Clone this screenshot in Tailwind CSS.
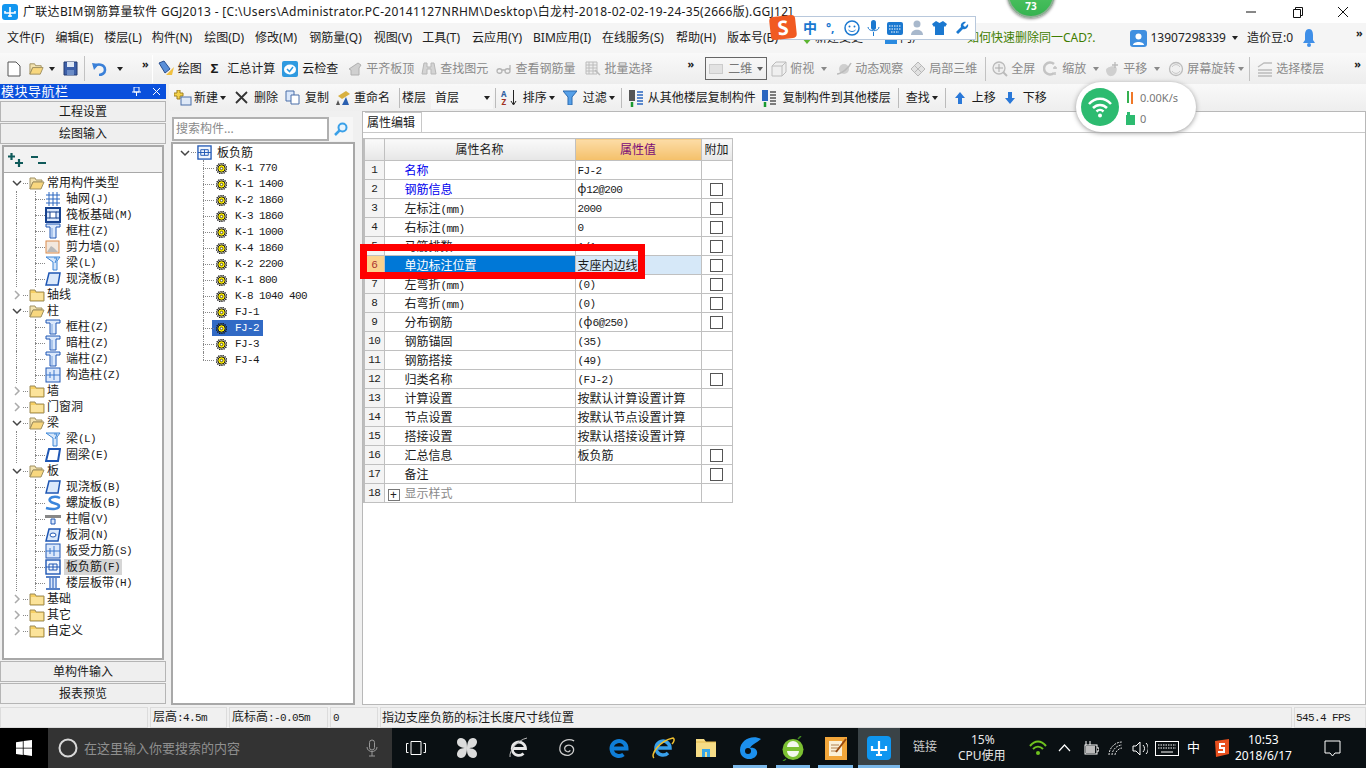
<!DOCTYPE html>
<html lang="en">
<head>
  <meta charset="UTF-8">
  <title>广联达BIM钢筋算量软件 GGJ2013</title>
  <script src="https://cdn.jsdelivr.net/npm/@tailwindcss/browser@4"></script>
</head>
<body class="w-[1366px] h-[768px] overflow-hidden relative flex flex-col bg-[#f0f0f0] text-[#1a1a1a] text-[12px] leading-none font-['Noto_Sans','Noto_Sans_CJK_SC',sans-serif]">

  <svg class="hidden">
    <symbol id="folder" viewBox="0 0 16 16"><path d="M1 3h5l1 2h8v9H1z" fill="#f6cf63" stroke="#9a8a5a"/><path d="M2 6h12v7H2z" fill="#fbe39a"/></symbol>
    <symbol id="folderopen" viewBox="0 0 16 16"><path d="M1 3h5l1 2h6v2H4l-3 7z" fill="#f3e3b0" stroke="#a09060"/><path d="M4 7h11l-3 7H1z" fill="#f8d77e" stroke="#a09060"/></symbol>
    <symbol id="column" viewBox="0 0 16 16"><path d="M1 1h14v3H11v11H5V4H1z" fill="#dbe8fb" stroke="#1f57b4"/><path d="M7 5v9" stroke="#7fa5de"/></symbol>
    <symbol id="grid" viewBox="0 0 16 16"><path d="M1 4h14M1 8h14M1 12h14M4 1v14M8 1v14M12 1v14" stroke="#2a66c0" fill="none"/></symbol>
    <symbol id="raft" viewBox="0 0 16 16"><rect x="1" y="1" width="14" height="14" fill="#dbe8fb" stroke="#17428f" stroke-width="2"/><rect x="5" y="5" width="6" height="6" fill="#fff" stroke="#17428f"/><path d="M1 5h4M11 5h4M1 11h4M11 11h4" stroke="#17428f"/></symbol>
    <symbol id="wall" viewBox="0 0 16 16"><rect x="1" y="2" width="13" height="12" fill="#f2e8de" stroke="#d98a4a"/><path d="M2 13l4-6 3 2 4 4z" fill="#b9b9b9"/></symbol>
    <symbol id="beam" viewBox="0 0 16 16"><path d="M1 2h14l-3 4v9H8V7z" fill="#d5e6fa" stroke="#3d86d6"/><path d="M9 3l3 0-2 5" stroke="#3d86d6" fill="none"/></symbol>
    <symbol id="slab" viewBox="0 0 16 16"><path d="M4 2h11l-2 12H1z" fill="#dbe9fb" stroke="#1f57b4" stroke-width="1.500"/></symbol>
    <symbol id="ring" viewBox="0 0 16 16"><path d="M4 2h11l-2 12H1z" fill="#fff" stroke="#1f57b4" stroke-width="2"/></symbol>
    <symbol id="spiral" viewBox="0 0 16 16"><path d="M15 3C9 0 3 3 5 6s9 2 9 5-6 4-13 2" fill="none" stroke="#3b86dc" stroke-width="2.500"/></symbol>
    <symbol id="cap" viewBox="0 0 16 16"><path d="M0 4h16v3H0z" fill="#888"/><path d="M6 8h4v5H6z" fill="#dbe8fb" stroke="#1f57b4"/></symbol>
    <symbol id="hole" viewBox="0 0 16 16"><path d="M4 2h11l-2 12H1z" fill="#dbe9fb" stroke="#1f57b4" stroke-width="1.500"/><ellipse cx="8" cy="8" rx="3" ry="2" fill="#fff" stroke="#1f57b4"/></symbol>
    <symbol id="rebar" viewBox="0 0 16 16"><rect x="1" y="1" width="14" height="14" fill="#dbe8fb" stroke="#1f57b4"/><path d="M1 8h14M9 3v10M5 5v6" stroke="#3b76cc" fill="none"/></symbol>
    <symbol id="neg" viewBox="0 0 16 16"><rect x="1" y="1" width="14" height="14" fill="#f1f6fd" stroke="#1f57b4" stroke-width="1.400"/><path d="M1 8h14M8 5v6M4 5h8v6H4z" stroke="#1f57b4" fill="none"/></symbol>
    <symbol id="band" viewBox="0 0 16 16"><path d="M1 2h14M1 14h14" stroke="#1f57b4" stroke-width="1.500"/><path d="M4 3h8v10H4z" fill="#dbe8fb"/><path d="M5 3v10M11 3v10M8 3v10" stroke="#1f57b4"/></symbol>
    <symbol id="gear" viewBox="0 0 12 12"><circle cx="6" cy="6" r="5.500" fill="none" stroke="#111" stroke-width="1.600" stroke-dasharray="1.400 1"/><circle cx="6" cy="6" r="4" fill="#ffee00" stroke="#111"/><circle cx="6" cy="6" r="1.400" fill="#fff" stroke="#111" stroke-width=".7"/></symbol>
    <symbol id="chev-d" viewBox="0 0 10 10"><path d="M1 3l4 4 4-4" fill="none" stroke="#444" stroke-width="1.500"/></symbol>
    <symbol id="chev-r" viewBox="0 0 10 10"><path d="M3 1l4 4-4 4" fill="none" stroke="#aaa" stroke-width="1.500"/></symbol>
    <symbol id="caret" viewBox="0 0 8 8"><path d="M1 2h6L4 6z" fill="#222"/></symbol>
    <!-- disabled toolbar icons -->
    <symbol id="g-align" viewBox="0 0 16 16"><path d="M2 8l9-6 3 2-2 3v7H4V9z" fill="#d0d0d0" stroke="#b0b0b0"/></symbol>
    <symbol id="g-binoc" viewBox="0 0 16 16"><path d="M3 2h3v4h4V2h3l2 11H10V8H6v5H1z" fill="#d4d4d4" stroke="#b8b8b8"/></symbol>
    <symbol id="g-glasses" viewBox="0 0 16 16"><path d="M1 10c0-3 5-3 5 0s-5 3-5 0zM9 10c0-3 5-3 5 0s-5 3-5 0zM6 9h3M14 9V4" fill="none" stroke="#b4b4b4" stroke-width="1.300"/></symbol>
    <symbol id="g-table" viewBox="0 0 16 16"><path d="M1 1h11v12H1zM1 4h11M1 7h11M1 10h11M4 1v12M8 1v12" fill="#eee" stroke="#bcbcbc"/><path d="M10 9l5 5" stroke="#bcbcbc" stroke-width="1.500"/></symbol>
    <symbol id="g-cube" viewBox="0 0 16 16"><path d="M1 5l4-4h10v10l-4 4H1zM1 5h10v10M11 5l4-4" fill="#efefef" stroke="#bcbcbc"/></symbol>
    <symbol id="g-orbit" viewBox="0 0 16 16"><circle cx="8" cy="8" r="5" fill="#cfcfcf"/><path d="M1 13C5 13 13 7 15 2" fill="none" stroke="#bbb" stroke-width="1.500"/></symbol>
    <symbol id="g-local" viewBox="0 0 16 16"><path d="M8 1l7 7-7 7-7-7z" fill="#e2e2e2" stroke="#b8b8b8"/><path d="M4.500 4.500l7 7M11.500 4.500l-7 7" stroke="#b8b8b8"/></symbol>
    <symbol id="g-fit" viewBox="0 0 16 16"><circle cx="7" cy="7" r="6" fill="#eee" stroke="#bbb" stroke-width="1.300"/><path d="M7 3v8M3 7h8" stroke="#aaa"/><path d="M11 11l4 4" stroke="#bbb" stroke-width="2"/></symbol>
    <symbol id="g-zoom" viewBox="0 0 16 16"><path d="M11 3a6 6 0 1 0 0 9" fill="none" stroke="#c4c4c4" stroke-width="2.500"/><path d="M12 5v3M10 7h4M12 11v3" stroke="#c4c4c4" stroke-width="1.500"/></symbol>
    <symbol id="g-pan" viewBox="0 0 16 16"><path d="M2 9c0-3 8-5 10-3s0 8-4 9-6-3-6-6z" fill="#cfcfcf"/><path d="M11 1v6M8 4h6" stroke="#bbb" stroke-width="1.300"/></symbol>
    <symbol id="g-rotate" viewBox="0 0 16 16"><circle cx="8" cy="8" r="6.500" fill="#f0f0f0" stroke="#bcbcbc" stroke-width="1.300"/><path d="M4 6a4.500 4.500 0 0 1 8 0M12 10a4.500 4.500 0 0 1-8 0" fill="none" stroke="#c8c8c8"/></symbol>
    <symbol id="g-floor" viewBox="0 0 16 16"><path d="M1 6l6-4h8M1 9h14M1 12h14M1 15h14" fill="none" stroke="#bcbcbc" stroke-width="1.300"/></symbol>
  </svg>

  <!-- title bar -->
  <div class="h-[23px] shrink-0 bg-white flex items-center pl-[2px]">
    <svg class="w-[16px] h-[16px] mr-[5px]" viewBox="0 0 16 16"><rect width="16" height="16" rx="3" fill="#1296f0"/><path d="M8 3v10M3 7v2h10V7M6 12h4" stroke="#fff" stroke-width="1.600" fill="none"/></svg>
    <span class="text-[12px] tracking-[0.31px]">广联达BIM钢筋算量软件 GGJ2013 - [C:\Users\Administrator.PC-20141127NRHM\Desktop\白龙村-2018-02-02-19-24-35(2666版).GGJ12]</span>
    <div class="ml-auto flex items-center h-full">
      <svg class="w-[46px] h-[20px]" viewBox="0 0 46 20"><path d="M18 10h10" stroke="#111"/></svg>
      <svg class="w-[46px] h-[20px]" viewBox="0 0 46 20"><path d="M19.500 7.500h7v8h-7zM21.500 7.500v-2h7v8h-2" fill="none" stroke="#111"/></svg>
      <svg class="w-[46px] h-[20px]" viewBox="0 0 46 20"><path d="M18 5l10 10M28 5L18 15" stroke="#111"/></svg>
    </div>
  </div>

  <!-- menu bar -->
  <div class="h-[30px] shrink-0 bg-[#f5f5f5] flex items-center pl-[7px] gap-[11px] text-[#222] whitespace-nowrap">
    <span>文件(F)</span><span>编辑(E)</span><span>楼层(L)</span><span class="-ml-[1px]">构件(N)</span><span class="ml-[1px]">绘图(D)</span><span>修改(M)</span><span class="ml-[1px]">钢筋量(Q)</span><span class="ml-[1px]">视图(V)</span><span class="-ml-[1px]">工具(T)</span><span class="ml-[1px]">云应用(Y)</span><span>BIM应用(I)</span><span>在线服务(S)</span><span class="ml-[1px]">帮助(H)</span><span>版本号(B)</span>
    <div class="ml-[11px] flex items-center gap-[1px]">
      <svg class="w-[14px] h-[14px]" viewBox="0 0 14 14"><path d="M7 13L1 6l3-4h6l3 4z" fill="#5cb531"/></svg>
      <span>新建变更</span>
    </div>
    <div class="ml-[10px] flex items-center gap-[2px]">
      <svg class="w-[14px] h-[14px]" viewBox="0 0 14 14"><path d="M1 4h12v9H1z" fill="#2a8ae0"/></svg>
      <span>门户</span>
    </div>
    <span class="ml-[32px] text-[#3f7d00]">如何快速删除同一CAD?.</span>
    <div class="ml-[24px] flex items-center">
      <svg class="w-[17px] h-[17px] mr-[3px]" viewBox="0 0 17 17"><rect width="17" height="17" rx="3" fill="#3f8fe0"/><circle cx="8.500" cy="6.500" r="3" fill="#fff"/><path d="M3 15c0-4 11-4 11 0z" fill="#fff"/></svg>
      <span>13907298339</span>
      <svg class="w-[8px] h-[8px] ml-[5px]"><use href="#caret"/></svg>
      <span class="ml-[8px]">造价豆:0</span>
      <svg class="w-[14px] h-[20px] ml-[9px]" viewBox="0 0 14 20"><path d="M7 1c-3 0-4 3-4 6v5l-2 3h12l-2-3V7c0-3-1-6-4-6z" fill="#3f8fe8"/><circle cx="7" cy="17" r="2" fill="#3f8fe8"/></svg>
      <span class="ml-[40px] font-bold text-[11px] relative -top-[6px]">»</span>
    </div>
  </div>

  <!-- main toolbar -->
  <div class="h-[31px] shrink-0 flex items-center whitespace-nowrap relative bg-gradient-to-b from-[#f9f9f9] to-[#ededed]">
    <svg class="w-[14px] h-[16px] ml-[7px]" viewBox="0 0 14 16"><path d="M1 1h8l4 4v10H1z" fill="#fff" stroke="#555"/></svg>
    <svg class="w-[17px] h-[15px] ml-[7px]" viewBox="0 0 16 16"><use href="#folderopen"/></svg>
    <svg class="w-[8px] h-[8px] ml-[3px]"><use href="#caret"/></svg>
    <svg class="w-[15px] h-[15px] ml-[7px]" viewBox="0 0 15 15"><path d="M1 1h13v13H1z" fill="#3c5fa8" stroke="#223a70"/><path d="M4 1h7v5H4z" fill="#dfe8f5"/><path d="M4 9h7v5H4z" fill="#6b8cc6"/></svg>
    <div class="w-px h-[25px] bg-[#c2c2c2] ml-[6px]"></div>
    <svg class="w-[15px] h-[14px] ml-[7px]" viewBox="0 0 15 14"><path d="M2 5c3-4 11-3 11 3 0 3-3 5-6 5" fill="none" stroke="#3a80d8" stroke-width="2.600"/><path d="M0 1l7 1-5 6z" fill="#3a80d8"/></svg>
    <svg class="w-[8px] h-[8px] ml-[9px]"><use href="#caret"/></svg>
    <span class="ml-[18px] font-bold text-[11px] relative -top-[5px]">»</span>
    <div class="w-px h-[28px] bg-[#fff] ml-[3px]"></div>
    <svg class="w-[18px] h-[18px] ml-[4px]" viewBox="0 0 18 18"><path d="M2 3l5-2 6 8-5 4z" fill="#5a8fd8" stroke="#2a4f90"/><path d="M9 15l8-8-2 8z" fill="#f0c040"/></svg>
    <span class="ml-[3px]">绘图</span>
    <span class="ml-[9px] font-bold text-[13px]">Σ</span>
    <span class="ml-[9px]">汇总计算</span>
    <svg class="w-[16px] h-[16px] ml-[7px]" viewBox="0 0 16 16"><rect width="16" height="16" rx="2" fill="#2f9ae0"/><ellipse cx="8" cy="8.500" rx="6" ry="5" fill="#fff"/><path d="M5 8l2.500 2.500L11 6" stroke="#2f9ae0" stroke-width="1.500" fill="none"/></svg>
    <span class="ml-[4px]">云检查</span>
    <svg class="w-[16px] h-[16px] ml-[9px]"><use href="#g-align"/></svg>
    <span class="ml-[3px] text-[#8a8a8a]">平齐板顶</span>
    <svg class="w-[16px] h-[16px] ml-[7px]"><use href="#g-binoc"/></svg>
    <span class="ml-[3px] text-[#8a8a8a]">查找图元</span>
    <svg class="w-[16px] h-[16px] ml-[8px]"><use href="#g-glasses"/></svg>
    <span class="ml-[3px] text-[#8a8a8a]">查看钢筋量</span>
    <svg class="w-[16px] h-[16px] ml-[10px]"><use href="#g-table"/></svg>
    <span class="ml-[3px] text-[#8a8a8a]">批量选择</span>
    <span class="ml-[35px] font-bold text-[11px] relative -top-[5px]">»</span>
    <div class="ml-[11px] w-[62px] h-[23px] border border-[#666] flex items-center pl-[3px] text-[#777]">
      <span class="w-[14px] h-[10px] bg-[#e2e2e2] border border-[#ccc] mr-[5px]"></span>二维
      <svg class="w-[8px] h-[8px] ml-auto mr-[2px] opacity-70"><use href="#caret"/></svg>
    </div>
    <svg class="w-[16px] h-[16px] ml-[4px]"><use href="#g-cube"/></svg>
    <span class="ml-[3px] text-[#8a8a8a]">俯视</span>
    <svg class="w-[8px] h-[8px] ml-[6px] opacity-50"><use href="#caret"/></svg>
    <svg class="w-[16px] h-[16px] ml-[8px]"><use href="#g-orbit"/></svg>
    <span class="ml-[3px] text-[#8a8a8a]">动态观察</span>
    <svg class="w-[16px] h-[16px] ml-[7px]"><use href="#g-local"/></svg>
    <span class="ml-[3px] text-[#8a8a8a]">局部三维</span>
    <div class="w-px h-[24px] bg-[#c2c2c2] ml-[8px]"></div>
    <svg class="w-[16px] h-[16px] ml-[6px]"><use href="#g-fit"/></svg>
    <span class="ml-[3px] text-[#8a8a8a]">全屏</span>
    <svg class="w-[16px] h-[16px] ml-[8px]"><use href="#g-zoom"/></svg>
    <span class="ml-[3px] text-[#8a8a8a]">缩放</span>
    <svg class="w-[8px] h-[8px] ml-[6px] opacity-50"><use href="#caret"/></svg>
    <svg class="w-[16px] h-[16px] ml-[4px]"><use href="#g-pan"/></svg>
    <span class="ml-[3px] text-[#8a8a8a]">平移</span>
    <svg class="w-[8px] h-[8px] ml-[6px] opacity-50"><use href="#caret"/></svg>
    <svg class="w-[16px] h-[16px] ml-[7px]"><use href="#g-rotate"/></svg>
    <span class="ml-[3px] text-[#8a8a8a]">屏幕旋转</span>
    <svg class="w-[8px] h-[8px] ml-[2px] opacity-50"><use href="#caret"/></svg>
    <div class="w-px h-[24px] bg-[#c2c2c2] ml-[4px]"></div>
    <svg class="w-[16px] h-[16px] ml-[7px]"><use href="#g-floor"/></svg>
    <span class="ml-[3px] text-[#8a8a8a]">选择楼层</span>
    <span class="ml-auto mr-[5px] font-bold text-[11px] relative -top-[5px]">»</span>
  </div>

  <!-- work area -->
  <div class="flex-1 min-h-0 flex">
    <!-- module nav -->
    <div class="w-[166px] shrink-0 flex flex-col">
      <div class="h-[15px] bg-[#0a50dc] text-white flex items-center pl-[1px] text-[13px] tracking-[0.5px]">模块导航栏
        <svg class="w-[9px] h-[9px] ml-auto" viewBox="0 0 9 9"><path d="M2 0h5v5H2zM0 5h9M4.500 5v4" stroke="#fff" fill="none"/></svg>
        <svg class="w-[9px] h-[9px] ml-[11px] mr-[5px]" viewBox="0 0 9 9"><path d="M1 1l7 7M8 1L1 8" stroke="#fff"/></svg>
      </div>
      <div class="h-[21px] mt-[2px] bg-[#efefef] border border-[#b5b5b5] flex items-center justify-center">工程设置</div>
      <div class="h-[21px] mt-[1px] bg-[#efefef] border border-[#b5b5b5] flex items-center justify-center">绘图输入</div>
      <div class="mt-[1px] h-[515px] mx-[2px] border-2 border-[#a8a8a8] bg-white flex flex-col">
        <div class="h-[26px] shrink-0 bg-[#f2f2f2] border-b border-[#a8a8a8] flex items-center pl-[3px] gap-[6px]">
          <svg class="w-[17px] h-[16px]" viewBox="0 0 17 16"><path d="M4.500 1v7M1 4.500h7M12 7v8M8 11h8" stroke="#0f5a5a" stroke-width="2.200"/></svg>
          <svg class="w-[17px] h-[16px]" viewBox="0 0 17 16"><path d="M1 5h7M8 11h8" stroke="#0f5a5a" stroke-width="2.200"/></svg>
        </div>
        <div id="navTree" class="flex-1 pt-[2px] overflow-hidden"></div>
      </div>
      <div class="h-[21px] mt-[1px] bg-[#efefef] border border-[#b5b5b5] flex items-center justify-center">单构件输入</div>
      <div class="h-[21px] mt-[1px] bg-[#efefef] border border-[#b5b5b5] flex items-center justify-center">报表预览</div>
    </div>

    <div class="flex-1 min-w-0 flex flex-col">
      <!-- component toolbar -->
      <div class="h-[27px] shrink-0 ml-[3px] flex items-center whitespace-nowrap bg-gradient-to-b from-[#f9f9f9] to-[#eeeeee] text-[12px]">
        <svg class="w-[18px] h-[16px] ml-[5px]" viewBox="0 0 18 16"><path d="M3 0h3v3h3v3H6v3H3V6H0V3h3z" fill="#f4d24a" stroke="#a08020"/><rect x="7" y="7" width="10" height="8" fill="#dfe9f7" stroke="#4a6fa8"/></svg>
        <span class="ml-[2px]">新建</span>
        <svg class="w-[8px] h-[8px] ml-[1px]"><use href="#caret"/></svg>
        <svg class="w-[13px] h-[13px] ml-[8px]" viewBox="0 0 13 13"><path d="M1 1l11 11M12 1L1 12" stroke="#333" stroke-width="1.800"/></svg>
        <span class="ml-[6px]">删除</span>
        <svg class="w-[15px] h-[15px] ml-[7px]" viewBox="0 0 15 15"><path d="M1 1h8v10H1z" fill="#dbe8fb" stroke="#4a6fa8"/><path d="M6 5h8v9H6z" fill="#fff" stroke="#4a6fa8"/></svg>
        <span class="ml-[5px]">复制</span>
        <svg class="w-[17px] h-[16px] ml-[6px]" viewBox="0 0 17 16"><path d="M3 6l8-5 4 3-8 5z" fill="#d8b040"/><path d="M7 15l4-8 3 8z" fill="#2a5fb0"/><path d="M1 15l2-5 2 5z" fill="#555"/></svg>
        <span class="ml-[2px]">重命名</span>
        <div class="w-px h-[20px] bg-[#bbb] ml-[9px]"></div>
        <span class="ml-[2px]">楼层</span>
        <div class="ml-[5px] w-[62px] h-[23px] bg-[#f7f7f7] flex items-center pl-[4px]">首层<svg class="w-[8px] h-[8px] ml-auto mr-[2px]"><use href="#caret"/></svg></div>
        <div class="w-px h-[20px] bg-[#bbb] ml-[2px]"></div>
        <span class="ml-[5px] text-[8px] leading-[8px] text-center font-bold text-[#3060a0]">A<br><span class="text-[#a03020]">Z</span></span>
        <svg class="w-[7px] h-[16px] ml-[3px]" viewBox="0 0 7 16"><path d="M3.500 0v14M1 11l2.500 4L6 11" stroke="#222" fill="none"/></svg>
        <span class="ml-[6px]">排序</span>
        <svg class="w-[8px] h-[8px] ml-[1px]"><use href="#caret"/></svg>
        <svg class="w-[14px] h-[15px] ml-[7px]" viewBox="0 0 14 15"><path d="M0 1h14L9 7v8H5V7z" fill="#56a0e8" stroke="#2a6ab0"/></svg>
        <span class="ml-[6px]">过滤</span>
        <svg class="w-[8px] h-[8px] ml-[1px]"><use href="#caret"/></svg>
        <div class="w-px h-[20px] bg-[#bbb] ml-[5px]"></div>
        <svg class="w-[16px] h-[18px] ml-[6px]" viewBox="0 0 16 18"><rect x="1" y="1" width="6" height="11" fill="#555"/><path d="M9 3h6M9 6h6M9 9h6M9 12h6M9 15h6" stroke="#2a66c0" stroke-width="1.500"/><path d="M4 13v5" stroke="#1a9a30" stroke-width="2.500"/></svg>
        <span class="ml-[4px]">从其他楼层复制构件</span>
        <svg class="w-[16px] h-[18px] ml-[5px]" viewBox="0 0 16 18"><rect x="1" y="1" width="6" height="11" fill="#2a66c0"/><path d="M9 3h6M9 6h6M9 9h6M9 12h6M9 15h6" stroke="#555" stroke-width="1.500"/><path d="M4 13v5" stroke="#1a9a30" stroke-width="2.500"/></svg>
        <span class="ml-[6px]">复制构件到其他楼层</span>
        <div class="w-px h-[20px] bg-[#bbb] ml-[7px]"></div>
        <span class="ml-[7px]">查找</span>
        <svg class="w-[8px] h-[8px] ml-[1px]"><use href="#caret"/></svg>
        <div class="w-px h-[20px] bg-[#bbb] ml-[6px]"></div>
        <svg class="w-[10px] h-[12px] ml-[9px]" viewBox="0 0 10 12"><path d="M5 0l5 6H7v6H3V6H0z" fill="#2a78d8"/></svg>
        <span class="ml-[7px]">上移</span>
        <svg class="w-[10px] h-[12px] ml-[9px]" viewBox="0 0 10 12"><path d="M5 12l5-6H7V0H3v6H0z" fill="#2a78d8"/></svg>
        <span class="ml-[8px]">下移</span>
      </div>

      <div class="flex-1 min-h-0 flex pb-[2px]">
        <!-- component tree -->
        <div class="w-[184px] shrink-0 ml-[5px] flex flex-col">
          <div class="h-[31px] shrink-0 flex items-center pt-[4px]">
            <div class="w-[157px] h-[24px] ml-[1px] bg-white border-2 border-[#b0b0b0] flex items-center pl-[2px] text-[#8a8a8a]">搜索构件...</div>
            <div class="w-[24px] h-[24px] bg-[#f6f6f6] flex items-center justify-center">
              <svg class="w-[14px] h-[14px]" viewBox="0 0 14 14"><circle cx="8.500" cy="5.500" r="4" fill="#e8f4fd" stroke="#3aa0e8" stroke-width="2"/><path d="M5.500 8.500L1 13" stroke="#3aa0e8" stroke-width="2.500"/></svg>
            </div>
          </div>
          <div id="compTree" class="flex-1 bg-white border-2 border-[#a8a8a8] overflow-hidden"></div>
        </div>

        <!-- property editor -->
        <div class="flex-1 min-w-0 ml-[7px] bg-white border border-[#b8b8b8] flex flex-col">
          <div class="h-[21px] shrink-0 border-b border-[#c8c8c8] flex items-end">
            <div class="w-[57px] h-[20px] ml-[2px] border-r border-t border-[#c8c8c8] flex items-center pl-[2px]">属性编辑</div>
          </div>
          <table class="mt-[5px] border-collapse table-fixed w-[368px] border-l-2 border-[#bdbdbd]">
            <colgroup><col class="w-[20px]"><col class="w-[191px]"><col class="w-[126px]"><col class="w-[31px]"></colgroup>
            <thead><tr class="h-[22px]">
              <th class="font-normal bg-gradient-to-b from-[#fafafa] to-[#e6e6e6] border border-[#c0c0c0]"></th>
              <th class="font-normal bg-gradient-to-b from-[#fafafa] to-[#e6e6e6] border border-[#c0c0c0]">属性名称</th>
              <th class="font-normal text-[#7a0a78] bg-gradient-to-b from-[#fcdca6] to-[#f4c068] border border-[#c0c0c0]">属性值</th>
              <th class="font-normal bg-gradient-to-b from-[#fafafa] to-[#e6e6e6] border border-[#c0c0c0]">附加</th>
            </tr></thead>
            <tbody id="props"></tbody>
          </table>
        </div>
      </div>
    </div>
  </div>

  <!-- status bar -->
  <div class="h-[21px] shrink-0 flex gap-[2px] text-[12px] bg-[#f0f0f0]">
    <div class="w-[148px] border border-[#dcdcdc]"></div>
    <div class="w-[77px] border border-[#dcdcdc] flex items-center pl-[2px]"><span class="js-mix">层高:4.5m</span></div>
    <div class="w-[99px] border border-[#dcdcdc] flex items-center pl-[2px]"><span class="js-mix">底标高:-0.05m</span></div>
    <div class="w-[48px] border border-[#dcdcdc] flex items-center pl-[2px]"><span class="js-mix">0</span></div>
    <div class="w-[912px] border border-[#dcdcdc] flex items-center pl-[1px]">指边支座负筋的标注长度尺寸线位置</div>
    <div class="flex-1 border border-[#dcdcdc] flex items-center pl-[1px]"><span class="js-mix">545.4 FPS</span></div>
  </div>

  <!-- taskbar -->
  <div class="h-[40px] shrink-0 bg-[#0a1013] flex items-center text-white whitespace-nowrap">
    <div class="w-[48px] h-full bg-black flex items-center justify-center">
      <svg class="w-[16px] h-[16px]" viewBox="0 0 16 16"><path d="M0 2.200l6.800-1v6.500H0zM7.600 1l8.400-1v7.700H7.600zM0 8.400h6.800v6.500l-6.800-1zM7.600 8.400H16V16l-8.400-1.200z" fill="#fff"/></svg>
    </div>
    <div class="w-[344px] h-full bg-[#333333] flex items-center pl-[9px] text-[13px] text-[#8f8f8f]">
      <svg class="w-[22px] h-[22px] mr-[5px]" viewBox="0 0 22 22"><circle cx="11" cy="11" r="8.500" fill="none" stroke="#d8d8d8" stroke-width="2"/></svg>
      在这里输入你要搜索的内容
      <svg class="w-[12px] h-[18px] ml-auto mr-[14px]" viewBox="0 0 12 18"><rect x="3.500" y="1" width="5" height="10" rx="2.500" fill="none" stroke="#999"/><path d="M1 8c0 6 10 6 10 0M6 13v4M3 17h6" stroke="#999" fill="none"/></svg>
    </div>
    <div class="flex-1 h-full relative" id="tray">
      <svg class="absolute left-[14px] top-[13px] w-[20px] h-[14px]" viewBox="0 0 20 14"><path d="M5 .5h10v13H5zM2.500 2.500H.5v9h2M17.500 2.500h2v9h-2" fill="none" stroke="#fff"/></svg>
      <svg class="absolute left-[64px] top-[9px] w-[22px] h-[22px]" viewBox="0 0 22 22"><path d="M11 11C5 11 1 9 1 5s4-5 7-3 3 5 3 9zM11 11c0-6 2-10 6-10s5 4 3 7-5 3-9 3zM11 11c6 0 10 2 10 6s-4 5-7 3-3-5-3-9zM11 11c0 6-2 10-6 10s-5-4-3-7 5-3 9-3z" fill="#dcdcdc"/></svg>
      <svg class="absolute left-[116px] top-[9px] w-[21px] h-[22px]" viewBox="0 0 21 22"><path d="M4 11.500h13.500a6.700 6.700 0 1 0-2 5" fill="none" stroke="#e8e8e8" stroke-width="2.800"/><path d="M2 20C1 13 10 3 19 1" fill="none" stroke="#bbb"/></svg>
      <svg class="absolute left-[166px] top-[10px] w-[19px] h-[19px]" viewBox="0 0 20 20"><path d="M17 3C10 0 3 3 2 10s6 9 10 8 6-6 3-9-8-1-8 2 4 5 6 2" fill="none" stroke="#ccc" stroke-width="1.300"/></svg>
      <svg class="absolute left-[216px] top-[9px] w-[21px] h-[22px]" viewBox="0 0 21 22"><path d="M3 11.500h15.500a7.500 7.500 0 1 0-3 6" fill="none" stroke="#0f7ed8" stroke-width="4"/></svg>
      <svg class="absolute left-[258px] top-[8px] w-[25px] h-[24px]" viewBox="0 0 25 24"><path d="M6 12h14a7 7 0 1 0-2 5" fill="none" stroke="#39a0ea" stroke-width="3.500"/><path d="M4 22C0 19 9 5 23 2c2 1 1 4-1 6" fill="none" stroke="#f0c030" stroke-width="1.500"/></svg>
      <svg class="absolute left-[303px] top-[10px] w-[22px] h-[20px]" viewBox="0 0 22 20"><path d="M1 1h8l2 3h10v15H1z" fill="#f6dc86"/><path d="M1 4h20" stroke="#e4b94a"/><path d="M7 11h8v8H7z" fill="#37a6e6"/><path d="M10 14h2v5h-2z" fill="#f6dc86"/></svg>
      <div class="absolute left-[341px] top-[37px] w-[34px] h-[3px] bg-[#7ab7e8]"></div>
      <svg class="absolute left-[346px] top-[8px] w-[24px] h-[25px]" viewBox="0 0 24 25"><path d="M23 3C14-2 2 4 2 14c0 9 11 12 16 6 3-4 0-9-6-8 2-4 7-5 11-9z" fill="#1c90ee"/><circle cx="10" cy="15" r="3" fill="#0a1013"/></svg>
      <div class="absolute left-[384px] top-[37px] w-[34px] h-[3px] bg-[#7ab7e8]"></div>
      <svg class="absolute left-[390px] top-[8px] w-[22px] h-[25px]" viewBox="0 0 22 25"><circle cx="11" cy="13.500" r="10.500" fill="#7cc032"/><path d="M5 11a6 6 0 0 1 12 0zM5 15a6 6 0 0 0 12 0z" fill="#f4f8ee"/><path d="M16 3l3-3M4 23l-3 2" stroke="#3f8a20" stroke-width="1.500"/></svg>
      <div class="absolute left-[426px] top-[37px] w-[35px] h-[3px] bg-[#7ab7e8]"></div>
      <svg class="absolute left-[432px] top-[8px] w-[24px] h-[25px]" viewBox="0 0 24 25"><rect x="1" y="1" width="22" height="23" fill="#f2a63a"/><rect x="5" y="5" width="13" height="15" fill="#fbf0d8"/><path d="M7 9h8M7 12h8M7 15h6" stroke="#b08050"/><path d="M22 3L12 16" stroke="#9a4a10" stroke-width="2"/></svg>
      <div class="absolute left-[466px] top-0 w-[42px] h-full bg-[#3a4347]">
        <svg class="absolute left-[9px] top-[8px] w-[24px] h-[24px]" viewBox="0 0 24 24"><rect width="24" height="24" rx="4" fill="#0f96f0"/><path d="M12 5v14M9 19h6M5 10v4h14v-4" stroke="#fff" stroke-width="2.200" fill="none"/></svg>
        <div class="absolute left-0 bottom-0 w-full h-[3px] bg-[#7ab7e8]"></div>
      </div>
      <span class="absolute left-[521px] top-[13px] text-[#ccc]">链接</span>
      <span class="absolute left-[579px] top-[6px] text-[#e8e8e8]">15%</span>
      <span class="absolute left-[566px] top-[22px] text-[#e8e8e8]">CPU使用</span>
      <svg class="absolute left-[637px] top-[12px] w-[18px] h-[16px]" viewBox="0 0 18 16"><path d="M1 6c5-6 11-6 16 0M4 9c3-3 7-3 10 0" fill="none" stroke="#6fc11f" stroke-width="2"/><circle cx="9" cy="13" r="2" fill="#6fc11f"/></svg>
      <svg class="absolute left-[666px] top-[16px] w-[13px] h-[8px]" viewBox="0 0 13 8"><path d="M1 7l5.500-6L12 7" fill="none" stroke="#fff" stroke-width="1.200"/></svg>
      <svg class="absolute left-[690px] top-[13px] w-[17px] h-[14px]" viewBox="0 0 17 14"><rect x="3" y="4" width="12" height="9" fill="none" stroke="#fff"/><rect x="4" y="5" width="9" height="7" fill="#bbb"/><path d="M4 0v4M8 0v4M15 7h2v3h-2" stroke="#fff"/></svg>
      <svg class="absolute left-[716px] top-[13px] w-[15px] h-[15px]" viewBox="0 0 15 15"><path d="M1 14C1 7 7 1 14 1M4 14c0-5 5-10 10-10M7 14c0-3 4-7 7-7" fill="none" stroke="#ddd" stroke-dasharray="2 1"/></svg>
      <svg class="absolute left-[740px] top-[13px] w-[16px] h-[15px]" viewBox="0 0 16 15"><path d="M1 5h3l4-4v13l-4-4H1zM11 4c2 2 2 5 0 7M14 2c3 3 3 8 0 11" fill="none" stroke="#fff"/></svg>
      <svg class="absolute left-[763px] top-[13px] w-[24px] h-[15px]" viewBox="0 0 24 15"><rect x=".5" y=".5" width="23" height="14" fill="none" stroke="#fff"/><path d="M3 4h18M3 7h18" stroke="#fff" stroke-dasharray="1.500 1"/><path d="M6 11h12" stroke="#fff"/></svg>
      <span class="absolute left-[795px] top-[13px] text-[13px]">中</span>
      <svg class="absolute left-[822px] top-[11px] w-[16px] h-[18px]" viewBox="0 0 16 18"><path d="M1 2l14-2v15L2 18z" fill="#e8501e"/><path d="M11 5H6v4h4v4H4" fill="none" stroke="#fff" stroke-width="2"/></svg>
      <span class="absolute left-[856px] top-[6px]">10:53</span>
      <span class="absolute left-[843px] top-[22px]">2018/6/17</span>
      <svg class="absolute left-[932px] top-[12px] w-[17px] h-[17px]" viewBox="0 0 17 17"><path d="M1 1h15v12h-5l-2.500 3-2.500-3H1z" fill="none" stroke="#fff"/></svg>
    </div>
  </div>

  <!-- floating widgets -->
  <div class="absolute left-[1007px] -top-[30px] w-[48px] h-[48px] rounded-full bg-gradient-to-b from-[#5fd06f] to-[#35b350] border-2 border-[#8fae95] shadow-[0_1px_3px_#888] flex items-end justify-center pb-[5px] text-white text-[10px] font-bold">73</div>

  <div class="absolute left-[780px] top-[16px] w-[196px] h-[24px] bg-white border border-[#b8c8dc] flex items-center pl-[22px] gap-[4px]">
    <span class="text-[#1a78d0] font-bold text-[14px] w-[15px]">中</span>
    <span class="text-[#1a78d0] font-bold text-[12px] w-[13px] ml-[4px]">°,</span>
    <svg class="w-[16px] h-[16px] ml-[1px]" viewBox="0 0 16 16"><circle cx="8" cy="8" r="7" fill="none" stroke="#1a78d0" stroke-width="1.500"/><circle cx="5.500" cy="6.500" r="1" fill="#1a78d0"/><circle cx="10.500" cy="6.500" r="1" fill="#1a78d0"/><path d="M4.500 10c2 2 5 2 7 0" stroke="#1a78d0" fill="none"/></svg>
    <svg class="w-[13px] h-[18px] ml-[3px]" viewBox="0 0 13 18"><rect x="4" y="1" width="5" height="10" rx="2.500" fill="#1a78d0"/><path d="M1 8c0 5 11 5 11 0M6.500 13v4" stroke="#1a78d0" fill="none"/></svg>
    <svg class="w-[16px] h-[13px] ml-[3px]" viewBox="0 0 16 13"><rect width="16" height="13" rx="2" fill="#1a78d0"/><path d="M2 4h12M2 7h12M4 10h8" stroke="#fff" stroke-dasharray="1.500 1"/></svg>
    <svg class="w-[16px] h-[16px] ml-[3px]" viewBox="0 0 16 16"><circle cx="7" cy="4" r="3.500" fill="#a8b8cc"/><path d="M1 15c0-7 12-7 12 0z" fill="#a8b8cc"/></svg>
    <svg class="w-[15px] h-[14px] ml-[2px]" viewBox="0 0 15 14"><path d="M4 0l3.500 2L11 0l4 3-2 3-1-1v9H3V5L2 6 0 3z" fill="#1a78d0"/></svg>
    <svg class="w-[14px] h-[14px] ml-[4px]" viewBox="0 0 14 14"><path d="M13 3l-3 3-2-2 3-3C8 0 5 3 6 6L1 11l2 2 5-5c3 1 6-2 5-5z" fill="#1a78d0"/></svg>
  </div>
  <div class="absolute left-[770px] top-[16px] w-[26px] h-[23px] bg-[#f15a22] rounded-[4px] -rotate-6 flex items-center justify-center text-white font-bold text-[20px]">S</div>

  <div class="absolute left-[1076px] top-[82px] w-[120px] h-[50px] rounded-full bg-white shadow-[0_1px_5px_#999]">
    <div class="absolute left-[5px] top-[6px] w-[38px] h-[38px] rounded-full bg-[#2dbb70] flex items-center justify-center">
      <svg class="w-[24px] h-[22px]" viewBox="0 0 24 22"><path d="M1 8c6-7 16-7 22 0M5 12c4-4 10-4 14 0M8.500 15.500c2-2 5-2 7 0" fill="none" stroke="#fff" stroke-width="2.500"/><circle cx="12" cy="19.500" r="2" fill="#fff"/></svg>
    </div>
    <svg class="absolute left-[49px] top-[9px] w-[10px] h-[13px]" viewBox="0 0 10 13"><path d="M3 0v12" stroke="#35b050" stroke-width="2"/><path d="M7 1v12" stroke="#f07828" stroke-width="2"/></svg>
    <span class="absolute left-[64px] top-[10px] text-[11px] text-[#777]">0.00K/s</span>
    <svg class="absolute left-[50px] top-[30px] w-[9px] h-[13px]" viewBox="0 0 9 13"><rect y="3" width="9" height="10" fill="#2dbb70"/><rect x="1" width="3" height="3" fill="#2dbb70"/></svg>
    <span class="absolute left-[64px] top-[31px] text-[11px] text-[#777]">0</span>
  </div>

  <div class="absolute left-[360px] top-[244px] w-[285px] h-[35px] border-[7px] border-[#ff0000]"></div>

  <script>
    // ascii parts use a narrow mono face, as the app's SimSun text does
    const mix = t => t.replace(/[\x21-\x7e ]+/g, m => `<span class="font-['Liberation_Mono'] text-[11px] tracking-[-0.6px]">${m}</span>`);
    document.querySelectorAll('.js-mix').forEach(el => { el.innerHTML = mix(el.textContent); });

    const navRows = [
      [0, '常用构件类型', 'open'], [1, '轴网(J)', 'grid'], [1, '筏板基础(M)', 'raft'], [1, '框柱(Z)', 'column'], [1, '剪力墙(Q)', 'wall'], [1, '梁(L)', 'beam'], [1, '现浇板(B)', 'slab'],
      [0, '轴线', 'closed'], [0, '柱', 'open'], [1, '框柱(Z)', 'column'], [1, '暗柱(Z)', 'column'], [1, '端柱(Z)', 'column'], [1, '构造柱(Z)', 'rebar'],
      [0, '墙', 'closed'], [0, '门窗洞', 'closed'], [0, '梁', 'open'], [1, '梁(L)', 'beam'], [1, '圈梁(E)', 'ring'],
      [0, '板', 'open'], [1, '现浇板(B)', 'slab'], [1, '螺旋板(B)', 'spiral'], [1, '柱帽(V)', 'cap'], [1, '板洞(N)', 'hole'], [1, '板受力筋(S)', 'rebar'], [1, '板负筋(F)', 'neg', true], [1, '楼层板带(H)', 'band'],
      [0, '基础', 'closed'], [0, '其它', 'closed'], [0, '自定义', 'closed']
    ];
    document.getElementById('navTree').innerHTML = navRows.map(([depth, label, icon, hl]) => {
      if (depth === 0) {
        const open = icon === 'open';
        return `<div class="h-[16px] relative flex items-center pl-[8px]">
          <svg class="w-[10px] h-[10px]"><use href="#${open ? 'chev-d' : 'chev-r'}"/></svg>
          <span class="w-[5px] border-t border-dotted border-[#888] ml-[1px]"></span>
          <svg class="w-[16px] h-[16px] ml-[1px]"><use href="#${open ? 'folderopen' : 'folder'}"/></svg>
          <span class="ml-[2px]">${label}</span></div>`;
      }
      return `<div class="h-[16px] relative flex items-center pl-[41px]">
        <span class="absolute left-[12px] inset-y-0 border-l border-dotted border-[#888]"></span>
        <span class="absolute left-[31px] inset-y-0 border-l border-dotted border-[#888]"></span>
        <span class="absolute left-[31px] top-[8px] w-[10px] border-t border-dotted border-[#888]"></span>
        <svg class="w-[16px] h-[16px]"><use href="#${icon}"/></svg>
        <span class="ml-[3px] px-[2px] h-[16px] flex items-center ${hl ? 'bg-[#d6d6d6]' : ''}">${mix(label)}</span></div>`;
    }).join('');

    const comps = ['K-1 770', 'K-1 1400', 'K-2 1860', 'K-3 1860', 'K-1 1000', 'K-4 1860', 'K-2 2200', 'K-1 800', 'K-8 1040 400', 'FJ-1', 'FJ-2', 'FJ-3', 'FJ-4'];
    document.getElementById('compTree').innerHTML = `<div class="h-[15px] flex items-center pl-[7px] mt-[1px]">
        <svg class="w-[10px] h-[10px]"><use href="#chev-d"/></svg>
        <span class="w-[5px] border-t border-dotted border-[#888] ml-[1px]"></span>
        <svg class="w-[15px] h-[15px] ml-[1px]"><use href="#neg"/></svg>
        <span class="ml-[5px]">板负筋</span></div>` + comps.map((c, i) => `<div class="h-[16px] relative flex items-center pl-[43px]">
        ${c === 'FJ-2' ? '<span class="absolute left-[39px] inset-y-0 w-[51px] bg-[#316ac5]"></span>' : ''}
        <span class="absolute left-[30px] ${i === comps.length - 1 ? 'top-0 h-[8px]' : 'inset-y-0'} border-l border-dotted border-[#888]"></span>
        <span class="absolute left-[30px] top-[8px] w-[11px] border-t border-dotted border-[#888]"></span>
        <svg class="w-[11px] h-[11px] relative"><use href="#gear"/></svg>
        <span class="ml-[8px] relative font-['Liberation_Mono'] text-[11px] tracking-[-0.6px] whitespace-pre ${c === 'FJ-2' ? 'text-white' : ''}">${c}</span></div>`).join('');

    // name, value, has checkbox, blue label
    const props = [
      ['名称', 'FJ-2', 0, 1], ['钢筋信息', 'ф12@200', 1, 1], ['左标注(mm)', '2000', 1], ['右标注(mm)', '0', 1], ['马筋排数', '1/1', 1],
      ['单边标注位置', '支座内边线', 1], ['左弯折(mm)', '(0)', 1], ['右弯折(mm)', '(0)', 1], ['分布钢筋', '(ф6@250)', 1], ['钢筋锚固', '(35)', 0],
      ['钢筋搭接', '(49)', 0], ['归类名称', '(FJ-2)', 1], ['计算设置', '按默认计算设置计算', 0], ['节点设置', '按默认节点设置计算', 0], ['搭接设置', '按默认搭接设置计算', 0],
      ['汇总信息', '板负筋', 1], ['备注', '', 1], ['显示样式', '', 0]
    ];
    document.getElementById('props').innerHTML = props.map(([name, value, check, blue], i) => {
      const sel = i === 5, last = i === 17;
      return `<tr class="h-[19px]">
        <td class="border border-[#c0c0c0] text-center pt-[1px] font-['Liberation_Mono'] text-[11px] tracking-[-0.6px] ${sel ? 'bg-[#fbd28e] text-[#a33]' : 'bg-[#f4f4f4] text-[#222]'}">${i + 1}</td>
        <td class="border border-[#c0c0c0] pt-[2px] ${sel ? 'bg-[#0078d7] text-white' : ''} ${blue ? 'text-[#0000ee]' : ''} ${last ? 'text-[#8a8a8a] pl-[3px]' : 'pl-[20px]'}">${last ? '<span class="inline-block w-[12px] h-[12px] border border-[#777] text-center text-[#222] leading-[10px] mr-[5px] align-[-1px]">+</span>' : ''}${mix(name)}</td>
        <td class="border border-[#c0c0c0] pl-[2px] pt-[1px] whitespace-nowrap overflow-hidden ${sel ? 'bg-[#d6e8f8]' : ''}">${mix(value)}</td>
        <td class="border border-[#c0c0c0] text-center">${check ? '<span class="inline-block w-[13px] h-[13px] border border-[#555] bg-white align-middle"></span>' : ''}</td></tr>`;
    }).join('');
  </script>
</body>
</html>
